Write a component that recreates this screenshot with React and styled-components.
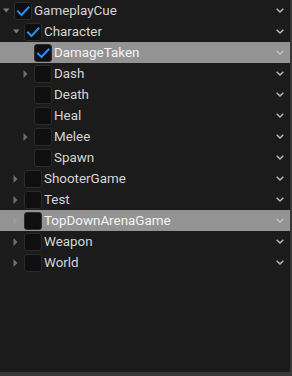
import React from "react";
import styled, { createGlobalStyle } from "styled-components";

const Global = createGlobalStyle`
  html, body { margin: 0; padding: 0; background: #383838; }
  body { font-family: Roboto, "Noto Sans", "Liberation Sans", sans-serif; }
`;

const Panel = styled.div`
  width: 290px;
  height: 372px;
  background: #1b1b1b;
  display: flex;
  flex-direction: column;
  overflow: hidden;
`;

const Row = styled.div`
  display: flex;
  align-items: center;
  height: 21px;
  flex: 0 0 21px;
  padding-left: ${(p) => p.$level * 10}px;
  padding-right: 6px;
  background: ${(p) => (p.$selected ? "#939393" : "transparent")};
`;

const ArrowSlot = styled.div`
  width: 14px;
  flex: 0 0 14px;
  height: 21px;
  display: flex;
  align-items: center;
  padding-left: 3px;
  box-sizing: border-box;
`;

const Box = styled.div`
  width: 18px;
  height: 18px;
  flex: 0 0 18px;
  box-sizing: border-box;
  border-radius: 3px;
  background: #0f0f0f;
  border: 1px solid #2c2c2c;
  display: flex;
  align-items: center;
  justify-content: center;
`;

const Label = styled.span`
  margin-left: 2px;
  flex: 1;
  font-size: 13.4px;
  line-height: 21px;
  color: ${(p) => (p.$selected ? "#f4f4f4" : "#d6d6d6")};
  white-space: nowrap;
  overflow: hidden;
`;

const Chevron = styled.svg`
  flex: 0 0 8px;
  display: block;
`;

const DownTri = () => (
  <svg width="7" height="5" viewBox="0 0 7 5">
    <polygon points="0,0.5 6.5,0.5 3.25,4.5" fill="#7c7c7c" />
  </svg>
);

const RightTri = ({ dim }) => (
  <svg width="5" height="8" viewBox="0 0 5 8">
    <polygon points="0.5,0 4.5,4 0.5,8" fill={dim ? "#9d9d9d" : "#6e6e6e"} />
  </svg>
);

const Check = () => (
  <svg width="14" height="12" viewBox="0 0 14 12">
    <polyline
      points="2,6.5 5.5,10 12.5,2.5"
      fill="none"
      stroke="#2a8cf5"
      strokeWidth="2"
      strokeLinecap="square"
    />
  </svg>
);

const items = [
  { label: "GameplayCue", level: 0, arrow: "down", checked: true },
  { label: "Character", level: 1, arrow: "down", checked: true },
  { label: "DamageTaken", level: 2, checked: true, selected: true },
  { label: "Dash", level: 2, arrow: "right" },
  { label: "Death", level: 2 },
  { label: "Heal", level: 2 },
  { label: "Melee", level: 2, arrow: "right" },
  { label: "Spawn", level: 2 },
  { label: "ShooterGame", level: 1, arrow: "right" },
  { label: "Test", level: 1, arrow: "right" },
  { label: "TopDownArenaGame", level: 1, arrow: "right", selected: true },
  { label: "Weapon", level: 1, arrow: "right" },
  { label: "World", level: 1, arrow: "right" },
];

export default function App() {
  return (
    <>
      <Global />
      <Panel>
        {items.map((it) => (
          <Row key={it.label} $level={it.level} $selected={it.selected}>
            <ArrowSlot>
              {it.arrow === "down" && <DownTri />}
              {it.arrow === "right" && <RightTri dim={it.selected} />}
            </ArrowSlot>
            <Box>{it.checked && <Check />}</Box>
            <Label $selected={it.selected}>{it.label}</Label>
            <Chevron width="8" height="5" viewBox="0 0 8 5">
              <polyline
                points="0.7,0.7 4,4 7.3,0.7"
                fill="none"
                stroke={it.selected ? "#c4c4c4" : "#bdbdbd"}
                strokeWidth="1.4"
              />
            </Chevron>
          </Row>
        ))}
      </Panel>
    </>
  );
}
